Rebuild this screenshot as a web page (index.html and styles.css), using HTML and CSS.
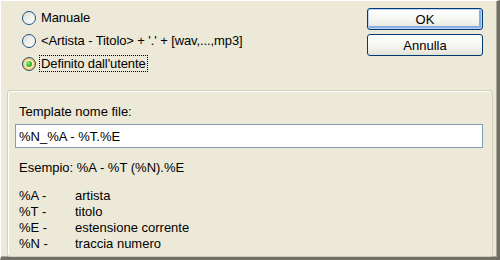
FILE: index.html
```html
<!DOCTYPE html>
<html lang="it">
<head>
    <meta charset="UTF-8">
    <title>Nome file</title>
    <link rel="stylesheet" href="styles.css">
</head>
<body>
    <div class="dialog">
        <div class="top">
            <div class="options">
                <label class="option"><span class="radio"></span><span class="text">Manuale</span></label>
                <label class="option"><span class="radio"></span><span class="text">&lt;Artista - Titolo&gt; + '.' + [wav,...,mp3]</span></label>
                <label class="option"><span class="radio checked"></span><span class="text focus">Definito dall'utente</span></label>
            </div>
            <div class="buttons">
                <button type="button" class="default">OK</button>
                <button type="button">Annulla</button>
            </div>
        </div>

        <div class="panel">
            <div class="label">Template nome file:</div>
            <input type="text" class="field" value="%N_%A - %T.%E">
            <div class="label example">Esempio: %A - %T (%N).%E</div>

            <div class="legend">
                <span>%A -</span><span>artista</span>
                <span>%T -</span><span>titolo</span>
                <span>%E -</span><span>estensione corrente</span>
                <span>%N -</span><span>traccia numero</span>
            </div>
        </div>
    </div>
</body>
</html>
```

FILE: styles.css
```css
* {
    box-sizing: border-box;
}
html, body {
    margin: 0;
    padding: 0;
}
body {
    width: 500px;
    height: 260px;
    background-color: #ece9d8;
    font-family: "Liberation Sans", Arial, sans-serif;
    font-size: 13px;
    color: #000;
}
.dialog {
    width: 500px;
    height: 260px;
    border-top: 1px solid #fff;
    border-left: 1px solid #fff;
    border-right: 3px solid #716f64;
    border-bottom: 3px solid #716f64;
    box-shadow: inset -1px -1px 0 #aca899;
    display: flex;
    flex-direction: column;
}
.top {
    display: flex;
    justify-content: space-between;
    height: 88px;
}
.options {
    display: flex;
    flex-direction: column;
    gap: 8px;
    padding: 9px 0 0 21px;
}
.option {
    display: flex;
    align-items: center;
    gap: 3px;
    height: 15px;
    letter-spacing: -0.1px;
}
.radio {
    width: 14px;
    height: 14px;
    border-radius: 50%;
    border: 1px solid #1c5180;
    background: linear-gradient(135deg, #d8d8d2 0%, #f0f0ec 50%, #ffffff 100%);
    position: relative;
}
.radio.checked {
    background: radial-gradient(circle, #fbf3d8 0 40%, #f9c860 62%, #e9a030 100%);
}
.radio.checked::after {
    content: "";
    position: absolute;
    left: 3px;
    top: 3px;
    width: 6px;
    height: 6px;
    border-radius: 50%;
    background: radial-gradient(circle at 35% 35%, #9cf098 0%, #3cbf37 45%, #1a8a17 100%);
}
.text {
    padding: 0 1px;
    line-height: 15px;
    border: 1px dotted transparent;
}
.text.focus {
    border-color: #000;
}
.buttons {
    display: flex;
    flex-direction: column;
    gap: 4px;
    padding: 7px 14px 0 0;
}
.buttons button {
    width: 116px;
    height: 22px;
    font-family: "Liberation Sans", Arial, sans-serif;
    font-size: 13px;
    color: #000;
    border: 1px solid #003c74;
    border-radius: 3px;
    background: linear-gradient(#ffffff 0%, #f4f4f0 60%, #e3e1d6 100%);
    padding: 0;
}
.buttons .default {
    box-shadow: inset 0 0 0 1px #bcd2f2, inset -1px -1px 0 2px #89ade4;
}
.panel {
    flex: 1;
    margin: 1px 4px 0 6px;
    border: 1px solid #d0d0bf;
    border-radius: 3px;
    box-shadow: inset 1px 1px 0 #fff;
    padding: 13px 10px 0 7px;
}
.label {
    padding-left: 4px;
    line-height: 16px;
}
.field {
    display: block;
    width: 468px;
    height: 24px;
    margin: 4px 0 12px;
    border: 1px solid #7f9db9;
    padding: 0 3px;
    font-family: "Liberation Sans", Arial, sans-serif;
    font-size: 13px;
    color: #000;
    background-color: #fff;
}
.example {
    margin-bottom: 12px;
}
.legend {
    display: grid;
    grid-template-columns: 56px auto;
    padding-left: 4px;
    line-height: 16px;
}
```
